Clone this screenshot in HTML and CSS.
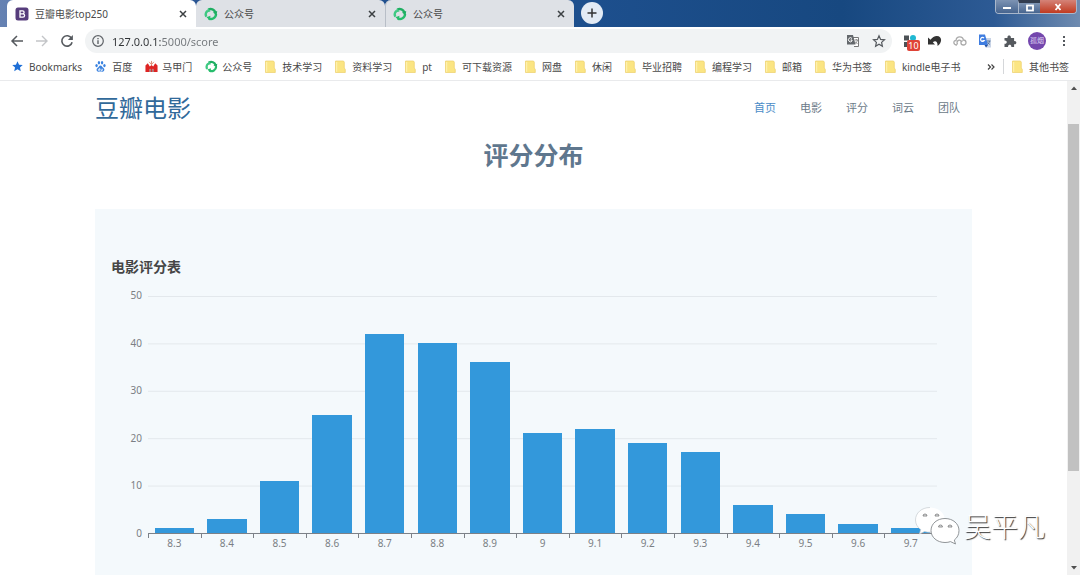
FILE: index.html
```html
<!DOCTYPE html>
<html lang="zh-CN">
<head>
<meta charset="utf-8">
<title>豆瓣电影top250</title>
<link rel="stylesheet" href="styles.css">
</head>
<body>
<svg class="defs" aria-hidden="true">
  <symbol id="recycle" viewBox="0 0 14 14">
    <path d="M2.4 9.8 A5 5 0 0 1 3.4 3.8" fill="none" stroke="#3fc983" stroke-width="2.4"/>
    <path d="M4.4 2.6 A5 5 0 0 1 11.4 5.4" fill="none" stroke="#1fae62" stroke-width="2.4"/>
    <path d="M12 7 A5 5 0 0 1 4.600 11.4" fill="none" stroke="#27bd6c" stroke-width="2.4"/>
    <path d="M2.400 5.4 6.6 4.600 4 1.200z" fill="#3fc983"/><path d="M9 5.400 12.600 8.400 13.200 4z" fill="#1fae62"/><path d="M6.400 8.800 2.5 10.200 6 13.400z" fill="#27bd6c"/>
  </symbol>
  <symbol id="folder" viewBox="0 0 11 13">
    <path d="M.5 1h8l.8 1.2V8l1 1.4V12.500H.5z" fill="#fbe583" stroke="#ecd06a" stroke-width=".7"/>
    <path d="M1.700 2v9.800" stroke="#fff3b5" stroke-width="1"/>
  </symbol>
  <symbol id="close" viewBox="0 0 10 10"><path d="M2 2l6 6M8 2l-6 6" stroke="#3c4043" stroke-width="1.500"/></symbol>
</svg>

<header class="browser">
  <div class="tabstrip">
    <div class="tab tab-active">
      <svg class="favicon" viewBox="0 0 14 14"><rect x=".5" y=".5" width="13" height="13" rx="2.500" fill="#563d7c"/><path d="M5 3.800h2.600a1.500 1.500 0 0 1 0 3H5zM5 6.800h2.900a1.700 1.700 0 0 1 0 3.400H5z" fill="none" stroke="#fff" stroke-width="1.300"/></svg>
      <span class="tab-title">豆瓣电影top250</span>
      <button class="tab-close" aria-label="关闭"><svg viewBox="0 0 10 10"><use href="#close"/></svg></button>
    </div>
    <div class="tab">
      <svg class="favicon"><use href="#recycle"/></svg>
      <span class="tab-title">公众号</span>
      <button class="tab-close" aria-label="关闭"><svg viewBox="0 0 10 10"><use href="#close"/></svg></button>
    </div>
    <div class="tab tab-last">
      <svg class="favicon"><use href="#recycle"/></svg>
      <span class="tab-title">公众号</span>
      <button class="tab-close" aria-label="关闭"><svg viewBox="0 0 10 10"><use href="#close"/></svg></button>
    </div>
    <button class="new-tab" aria-label="新标签页"><svg viewBox="0 0 10 10"><path d="M5 .5v9M.5 5h9" stroke="#333" stroke-width="1.500"/></svg></button>
    <div class="window-buttons">
      <button class="win" aria-label="最小化"><svg viewBox="0 0 12 10"><path d="M2 6h8" stroke="#fff" stroke-width="2.200"/></svg></button>
      <button class="win win-max" aria-label="还原"><svg viewBox="0 0 12 10"><rect x="3" y="2.500" width="6" height="5" fill="none" stroke="#fff" stroke-width="1.800"/></svg></button>
      <button class="win win-close" aria-label="关闭窗口"><svg viewBox="0 0 12 10"><path d="M3.500 2l5 6M8.500 2l-5 6" stroke="#fff" stroke-width="1.800"/></svg></button>
    </div>
  </div>

  <div class="toolbar">
    <button class="tool" aria-label="后退"><svg viewBox="0 0 14 14"><path d="M13 7H2M7 2 2 7l5 5" fill="none" stroke="#55595e" stroke-width="1.500"/></svg></button>
    <button class="tool" aria-label="前进"><svg viewBox="0 0 14 14"><path d="M1 7h11M7 2l5 5-5 5" fill="none" stroke="#c3c5c8" stroke-width="1.400"/></svg></button>
    <button class="tool" aria-label="刷新"><svg viewBox="0 0 14 14"><path d="M11.600 4.400A5.200 5.200 0 1 0 12.100 8.200" fill="none" stroke="#55595e" stroke-width="1.600"/><path d="M12.900 1v5H7.900z" fill="#55595e"/></svg></button>
    <div class="address">
      <svg class="icon" viewBox="0 0 14 14"><circle cx="7" cy="7" r="5.300" fill="none" stroke="#5f6368" stroke-width="1.200"/><path d="M7 6.300v3.700M7 3.900v1.300" stroke="#5f6368" stroke-width="1.400"/></svg>
      <input class="url" type="text" aria-label="地址" value="127.0.0.1:5000/score">
      <button class="tool" aria-label="翻译此页"><svg viewBox="0 0 14 14"><path d="M6 3.500h6.500v9H8" fill="#fff" stroke="#777" /><path d="M1 1h6l2.500 9.500H1z" fill="#64686c"/><path d="M6 4.500A2 2 0 1 0 6 7V6H4.500" fill="none" stroke="#fff"/><path d="M8.500 6h3.500M10.300 5v1M11.500 6c-.5 2-1.500 3-2.500 3.500M9 7.500l2.500 2.500" stroke="#777" fill="none" stroke-width=".8"/></svg></button>
      <button class="tool" aria-label="添加书签"><svg viewBox="0 0 14 14"><path d="M7 1.800 8.600 5.400l3.900.4-2.900 2.600.8 3.900L7 10.300l-3.400 2 .8-3.900L1.500 5.800l3.900-.4z" fill="none" stroke="#55595e" stroke-width="1.200"/></svg></button>
    </div>
    <div class="extensions">
      <button class="tool tool-badge" aria-label="扩展"><svg viewBox="0 0 14 14"><path d="M1 1.500h5v5H1zM1 8h5v5H1z" fill="#4d5256"/><circle cx="10" cy="4" r="3" fill="#20b8d2"/><path d="M8 8h5v5H8z" fill="#4d5256"/></svg><span class="badge">10</span></button>
      <button class="tool" aria-label="撤销"><svg viewBox="0 0 14 14"><path d="M0 3.500v7h7L4.800 8.200C7.200 6 10 7.200 9.500 12c5-3.400 4.800-10-.7-10C6.500 2 4.200 3.300 2.500 5.800z" fill="#333"/></svg></button>
      <button class="tool" aria-label="云"><svg viewBox="0 0 14 14"><path d="M4 11C0 11 0 6.500 3 6.500 3.500 1.500 10 2 10.300 6c3.500 0 3.700 5 0 5-3 0-3-4-.7-4M4.500 10.500c-2-4 3-6 4-2.500" fill="none" stroke="#aaa" stroke-width="1.300"/></svg></button>
      <button class="tool" aria-label="翻译"><svg viewBox="0 0 14 14"><path d="M6 4h7v9.500H8z" fill="#c9d4e6"/><path d="M1 .5h6l3 10.500H1z" fill="#3f7de0"/><path d="M6 4A2 2 0 1 0 6.300 6.500H4.500" fill="none" stroke="#fff" stroke-width="1.200"/><path d="M9 7h3.500M11.500 7c-.3 2-1.200 3-2 3.500M9.500 8.500l2.300 2" stroke="#56749c" fill="none"/><path d="M6.500 11H10l-2 2.500z" fill="#244f9d"/></svg></button>
      <button class="tool" aria-label="扩展程序"><svg viewBox="0 0 14 14"><path d="M1.500 4h3c-.8-3.500 4-3.500 3.300 0h3.300v3.200c3-.7 3 3.700 0 3V13H8.300c.5-3-3.700-3-3.200 0H1.500V9.700c3 .5 3-3.600 0-3.100z" fill="#55595e"/></svg></button>
      <button class="avatar" aria-label="用户">孤烟</button>
      <button class="tool" aria-label="菜单"><svg viewBox="0 0 14 14"><path d="M6 2h2v2H6zM6 6h2v2H6zM6 10h2v2H6z" fill="#55595e"/></svg></button>
    </div>
  </div>

  <nav class="bookmarks" aria-label="书签栏">
    <a class="bookmark" href="#"><svg viewBox="0 0 12 12"><path d="M6 .3 7.700 4l4 .4-3 2.700.9 4L6 9.100 2.400 11.100l.9-4-3-2.700 4-.4z" fill="#1f6fd6"/></svg>Bookmarks</a>
    <a class="bookmark" href="#"><svg viewBox="0 0 12 12"><g fill="#3b83e0"><ellipse cx="1.700" cy="5" rx="1.300" ry="1.800"/><ellipse cx="4.300" cy="2" rx="1.300" ry="1.900"/><ellipse cx="7.700" cy="2" rx="1.300" ry="1.900"/><ellipse cx="10.300" cy="5" rx="1.300" ry="1.800"/><path d="M6 4.800c1.500 0 1.900 1.700 3 2.600 2.400 2 .8 4.400-.8 4.200-1.700-.2-2.700-.2-4.400 0-1.800.2-3.200-2.200-.8-4.200 1.100-.9 1.500-2.600 3-2.600z"/></g><path d="M5 7.500v2.800H3.700V9H5M6.500 8.500v1.800H8V8.500" fill="none" stroke="#fff" stroke-width=".8"/></svg>百度</a>
    <a class="bookmark bookmark-wide" href="#"><svg viewBox="0 0 14 13"><path d="M.5 5.500 3 3 5.200 6.500 7 5l1.800 1.500L11 3l2.500 2.500V12.500H.5z" fill="#de2423"/><path d="M4.500 1.500 7 4.500 9.500 1.500M7 .5v4" fill="none" stroke="#db8b72"/><path d="M5 12.500V9.500h1v3M8 12.500V9.500h1v3" stroke="#fff" stroke-width=".5"/></svg>马甲门</a>
    <a class="bookmark bookmark-wide" href="#"><svg><use href="#recycle"/></svg>公众号</a>
    <a class="bookmark" href="#"><svg><use href="#folder"/></svg>技术学习</a>
    <a class="bookmark" href="#"><svg><use href="#folder"/></svg>资料学习</a>
    <a class="bookmark" href="#"><svg><use href="#folder"/></svg>pt</a>
    <a class="bookmark" href="#"><svg><use href="#folder"/></svg>可下载资源</a>
    <a class="bookmark" href="#"><svg><use href="#folder"/></svg>网盘</a>
    <a class="bookmark" href="#"><svg><use href="#folder"/></svg>休闲</a>
    <a class="bookmark" href="#"><svg><use href="#folder"/></svg>毕业招聘</a>
    <a class="bookmark" href="#"><svg><use href="#folder"/></svg>编程学习</a>
    <a class="bookmark" href="#"><svg><use href="#folder"/></svg>邮箱</a>
    <a class="bookmark" href="#"><svg><use href="#folder"/></svg>华为书签</a>
    <a class="bookmark" href="#"><svg><use href="#folder"/></svg>kindle电子书</a>
    <div class="bookmarks-end">
      <button class="more" aria-label="更多书签"><svg viewBox="0 0 8 8"><path d="M1 1.500 3.500 4 1 6.500M4.500 1.500 7 4 4.500 6.500" fill="none" stroke="#444" stroke-width="1.200"/></svg></button>
      <a class="bookmark bookmark-other" href="#"><svg><use href="#folder"/></svg>其他书签</a>
    </div>
  </nav>
</header>

<div class="viewport">
  <div class="page">
    <div class="site-header">
      <a class="logo" href="#">豆瓣电影</a>
      <nav class="menu" aria-label="主导航">
        <a class="menu-link menu-current" href="#">首页</a>
        <a class="menu-link" href="#">电影</a>
        <a class="menu-link" href="#">评分</a>
        <a class="menu-link" href="#">词云</a>
        <a class="menu-link" href="#">团队</a>
      </nav>
    </div>
    <main>
      <h1 class="title">评分分布</h1>
      <section class="panel">
        <h2 class="chart-title">电影评分表</h2>
        <div class="chart">
          <div class="y-axis"><span>50</span><span>40</span><span>30</span><span>20</span><span>10</span><span>0</span></div>
          <div class="plot">
            <div class="bars">
              <div class="bar" style="height:2%"></div>
              <div class="bar" style="height:6%"></div>
              <div class="bar" style="height:22%"></div>
              <div class="bar" style="height:50%"></div>
              <div class="bar" style="height:84%"></div>
              <div class="bar" style="height:80%"></div>
              <div class="bar" style="height:72%"></div>
              <div class="bar" style="height:42%"></div>
              <div class="bar" style="height:44%"></div>
              <div class="bar" style="height:38%"></div>
              <div class="bar" style="height:34%"></div>
              <div class="bar" style="height:12%"></div>
              <div class="bar" style="height:8%"></div>
              <div class="bar" style="height:4%"></div>
              <div class="bar" style="height:2%"></div>
            </div>
            <div class="x-axis"><span>8.3</span><span>8.4</span><span>8.5</span><span>8.6</span><span>8.7</span><span>8.8</span><span>8.9</span><span>9</span><span>9.1</span><span>9.2</span><span>9.3</span><span>9.4</span><span>9.5</span><span>9.6</span><span>9.7</span></div>
          </div>
        </div>
      </section>
    </main>
  </div>
  <div class="scrollbar">
    <svg class="arrow" viewBox="0 0 8 6"><path d="M1 5 4 1.500 7 5z" fill="#505050"/></svg>
    <div class="track"><div class="thumb"></div></div>
    <svg class="arrow" viewBox="0 0 8 6"><path d="M1 1 4 4.500 7 1z" fill="#505050"/></svg>
  </div>
  <div class="watermark">
    <svg viewBox="0 0 46 40">
      <path d="M16 1.500C7.500 1.500 1.500 7 1.500 14c0 4 2 7.300 5.200 9.500L5.500 28l5-2.500c2 .6 4 .8 6.500.7" fill="#fff" stroke="#c5cbd0" stroke-width=".7"/>
      <path d="M16 1.500c8 0 14 5 14.800 11.500L17 26" fill="#fff"/>
      <path d="M31 12.500c-8 0-14 5.300-14 12s6 12 14 12c2 0 4-.3 5.500-.9l5 2.400-1.200-4c3-2.200 4.700-5.500 4.700-9.500 0-6.700-6-12-14-12z" fill="#fff" stroke="#85898c" stroke-width=".9"/>
      <path d="M9 10a2 2 0 0 1 4 0zM21 10a2 2 0 0 1 4 0zM24.500 21a2 2 0 0 1 4 0zM34 21a2 2 0 0 1 4 0z" fill="#e7eaec" stroke="#777" stroke-width=".8"/>
    </svg>
    <span>吴平凡</span>
  </div>
</div>
</body>
</html>
```
FILE: styles.css
```css
* { box-sizing: border-box; }
body {
  margin: 0;
  height: 100vh;
  display: flex;
  flex-direction: column;
  overflow: hidden;
  background: #fff;
  color: #4a4a4a;
  font-family: "Noto Sans", "Noto Sans CJK SC", sans-serif;
  font-size: 10px;
}
a { color: inherit; text-decoration: none; }
button { border: 0; padding: 0; background: none; font: inherit; color: inherit; }
svg { display: block; }
.defs { position: absolute; width: 0; height: 0; }

.tabstrip {
  display: flex;
  height: 27px;
  padding-left: 7px;
  background: linear-gradient(90deg, #6682b3 0, #23508f 20%, #1d4f8d 55%, #174880 78%, #2d5a94 92%, #6f8bb0 100%);
}
.tab {
  display: flex;
  align-items: center;
  gap: 6px;
  flex: 0 1 189px;
  padding: 0 8px;
  background: #dee1e6;
  border-radius: 6px 6px 0 0;
}
.tab-active { background: #fff; }
.tab-last { box-shadow: inset 1px 0 #b8bec7; }
.favicon { width: 14px; height: 14px; }
.tab-title { flex: 1; }
.tab-close, .tab-close svg { width: 10px; height: 10px; }
.new-tab {
  display: grid;
  place-items: center;
  width: 22px;
  height: 22px;
  margin: 2px 0 0 7px;
  border-radius: 50%;
  background: #e3ebf5;
}
.new-tab svg { width: 10px; height: 10px; }
.window-buttons { display: flex; height: 14px; margin: 0 3px 0 auto; border: 1px solid #a9b7cb; border-top: 0; border-radius: 0 0 4px 4px; overflow: hidden; }
.win { display: grid; place-items: center; width: 22px; background: linear-gradient(#7d93b3, #47658f); }
.win-max { border-left: 1px solid #a9b7cb; border-top: 3px solid #333d50; }
.win-close { width: 36px; background: linear-gradient(#d48378, #c13a20); }
.win svg { width: 12px; height: 10px; }

.toolbar { display: flex; align-items: center; gap: 11px; height: 28px; padding: 0 9px 0 10px; }
.tool { flex: none; width: 14px; height: 14px; }
.tool svg, .icon { width: 14px; height: 14px; }
.address {
  display: flex;
  flex: 1;
  align-items: center;
  gap: 12px;
  height: 24px;
  padding: 0 6px;
  border-radius: 12px;
  background: #f1f3f4;
}
.url {
  flex: 1;
  min-width: 0;
  margin-left: -5px;
  padding: 0;
  border: 0;
  outline: 0;
  background: linear-gradient(90deg, #303336 50px, #73777b 50px);
  background-clip: text;
  -webkit-text-fill-color: transparent;
  color: #303336;
  font: 11px "Noto Sans", sans-serif;
}
.extensions { display: flex; align-items: center; gap: 11px; }
.tool-badge { position: relative; }
.badge {
  position: absolute;
  left: 4px;
  top: 6px;
  width: 13px;
  border-radius: 2px;
  background: #df4337;
  color: #fff;
  font-size: 9px;
  line-height: 11px;
}
.avatar { width: 18px; height: 18px; border-radius: 50%; background: #7447ad; color: #ddd0f0; font-size: 7px; line-height: 18px; }

.bookmarks {
  display: flex;
  align-items: center;
  gap: 13px;
  height: 26px;
  padding: 0 11px 2px 12px;
  border-bottom: 1px solid #e9eaec;
  white-space: nowrap;
}
.bookmark { display: flex; align-items: center; gap: 6px; }
.bookmark svg { width: 11px; height: 13px; }
.bookmark-wide { gap: 4px; }
.bookmark-wide svg { width: 13px; }
.bookmarks-end { display: flex; align-items: center; gap: 8px; margin-left: auto; }
.more svg { width: 8px; height: 8px; }
.bookmark-other { padding-left: 8px; border-left: 1px solid #d5d7da; }

.viewport { position: relative; flex: 1; min-height: 0; display: flex; }
.page { flex: 1; padding: 0 95px; overflow: hidden; }
.site-header { display: flex; align-items: center; justify-content: space-between; height: 51px; padding-right: 12px; }
.logo { color: #31699a; font-family: "Noto Sans CJK SC", sans-serif; font-size: 24px; font-weight: 400; }
.menu { display: flex; gap: 24px; font-size: 11px; color: #6b7a88; }
.menu-current { color: #4a8cc7; }
.title { margin: 3px 0 34px; color: #5f778e; font-size: 25px; line-height: 40px; text-align: center; }
.panel { padding: 48px 35px 60px 16px; background: #f4f9fc; }
.chart-title { margin: 0; color: #464646; font-size: 14px; line-height: 20px; }
.chart { display: flex; gap: 6px; margin-top: 19px; }
.y-axis {
  display: flex;
  flex-direction: column;
  justify-content: space-between;
  width: 31px;
  height: 252px;
  margin-top: -8px;
  line-height: 14px;
  text-align: right;
  color: #7b7f84;
}
.plot { flex: 1; }
.bars {
  display: grid;
  grid-template-columns: repeat(15, 1fr);
  align-items: end;
  justify-items: center;
  height: 238px;
  border-bottom: 1px solid #7c8188;
  background: linear-gradient(#e3e8ec 1px, transparent 1px) 0 0 / 100% 20%;
}
.bar { width: 75%; background: #3398db; }
.x-axis { display: grid; grid-template-columns: repeat(15, 1fr); color: #7b7f84; text-align: center; line-height: 14px; }
.x-axis span {
  padding-top: 2px;
  background: linear-gradient(#7c8188, #7c8188) 0 0 / 1px 4px no-repeat;
}

.scrollbar { display: flex; flex-direction: column; align-items: center; width: 13px; padding: 4px 0; background: #f1f1f1; }
.arrow { flex: none; width: 8px; height: 6px; }
.track { flex: 1; width: 11px; padding: 33px 0; }
.thumb { height: 85%; background: #c1c1c1; }

.watermark {
  position: absolute;
  right: 35px;
  bottom: 29px;
  display: flex;
  align-items: center;
  gap: 4px;
  color: #fff;
  font: 300 27px/40px "Noto Sans CJK SC", sans-serif;
  text-shadow: 1px 1px 1px #333;
}
.watermark svg { width: 46px; height: 40px; }
```
